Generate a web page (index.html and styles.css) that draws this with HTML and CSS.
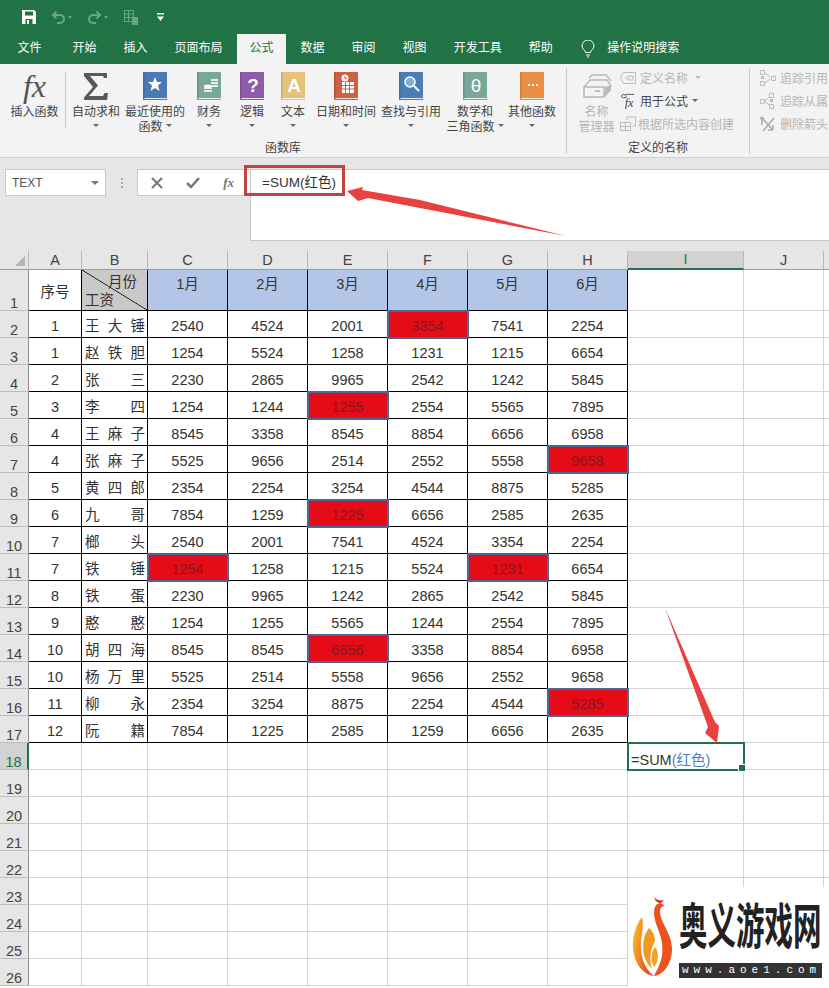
FILE: index.html
```html
<!DOCTYPE html>
<html lang="zh-CN">
<head>
<meta charset="utf-8">
<title>Excel</title>
<link rel="stylesheet" href="styles.css">
</head>
<body>
<div class="app">
  <header class="titlebar">
    <svg class="qat-save" width="16" height="16" viewBox="0 0 16 16"><path fill="#fff" d="M1 1h12l2 2v12H1z"/><path fill="#217346" d="M4 2.500h8v4H4zM4.500 10h7v5h-7z"/><path fill="#fff" d="M6 11h2v4H6z"/></svg>
    <svg class="qat-undo" width="15" height="14" viewBox="0 0 15 14"><path fill="none" stroke="#6ba487" stroke-width="2" d="M3 5h6a4 4 0 0 1 0 8H6M5.500 1.500 2 5l3.500 3.500"/></svg>
    <i class="qat-drop"></i>
    <svg class="qat-redo" width="15" height="14" viewBox="0 0 15 14"><path fill="none" stroke="#6ba487" stroke-width="2" d="M12 5H6a4 4 0 0 0 0 8h3M9.500 1.500 13 5 9.500 8.500"/></svg>
    <i class="qat-drop"></i>
    <svg class="qat-print" width="17" height="17" viewBox="0 0 17 17"><path fill="none" stroke="#6ba487" d="M1.500 1.500h9v11h-9zM1.500 5h9M1.500 8.500h9M5.500 1.500v11"/><path fill="#6ba487" d="M9 8h6v8H9z"/></svg>
    <svg class="qat-more" width="7" height="8" viewBox="0 0 7 8"><path fill="#fff" d="M0 0h7v1.500H0zM0 3.500h7L3.500 8z"/></svg>
  </header>

  <nav class="tabs">
    <span class="tab tab-file">文件</span>
    <span class="tab">开始</span>
    <span class="tab">插入</span>
    <span class="tab">页面布局</span>
    <span class="tab tab-active">公式</span>
    <span class="tab">数据</span>
    <span class="tab">审阅</span>
    <span class="tab">视图</span>
    <span class="tab">开发工具</span>
    <span class="tab">帮助</span>
    <svg class="bulb" width="14" height="18" viewBox="0 0 14 18"><path fill="none" stroke="#fff" d="M4.500 12.500C4 10 1 9 1 6a6 6 0 0 1 12 0c0 3-3 4-3.500 6.500zM5 15h4M6 17h2"/></svg>
    <span class="tab-search">操作说明搜索</span>
  </nav>

  <section class="ribbon">
    <div class="group group-lib">
      <div class="group-body">
        <div class="btn btn-insert">
          <div class="ico"><span class="fx-big">fx</span></div>
          <span class="line">插入函数</span>
        </div>
        <i class="vsep"></i>
        <div class="btn w60">
          <div class="ico"><svg width="24" height="27" viewBox="0 0 24 27"><path fill="#595959" d="M0 0h23v5h-3l-1-2H6l8 9.500L5 23h14l1.500-3H24l-1 7H0v-2.500L9 14 0 3z"/></svg></div>
          <span class="line">自动求和</span>
          <span class="line"><i class="caret"></i></span>
        </div>
        <div class="btn w58">
          <div class="ico"><svg class="book" viewBox="0 0 24 28"><use href="#bk" fill="#4a7ab5"/><path fill="#fff" d="m12 5 2 5h5l-4 3.500 1.500 5.500-4.500-3-4.500 3L9 13.500 5 10h5z"/></svg></div>
          <span class="line">最近使用的</span>
          <span class="line">函数 <i class="caret"></i></span>
        </div>
        <div class="btn w50">
          <div class="ico"><svg class="book" viewBox="0 0 24 28"><use href="#bk" fill="#7aa896"/><path fill="#e8f0ec" d="M7 15h8v2H7zM7 18h8v2H7zM14 7h7v2h-7zM14 10h7v2h-7zM15 13h6v2h-6z"/><ellipse cx="11" cy="14" rx="4" ry="1.500" fill="#fff"/></svg></div>
          <span class="line">财务</span>
          <span class="line"><i class="caret"></i></span>
        </div>
        <div class="btn w36">
          <div class="ico"><svg class="book" viewBox="0 0 24 28"><use href="#bk" fill="#8e5ba8"/><text x="13" y="20" class="ico-t">?</text></svg></div>
          <span class="line">逻辑</span>
          <span class="line"><i class="caret"></i></span>
        </div>
        <div class="btn w46">
          <div class="ico"><svg class="book" viewBox="0 0 24 28"><use href="#bk" fill="#e7c27a"/><text x="13" y="20" class="ico-t">A</text></svg></div>
          <span class="line">文本</span>
          <span class="line"><i class="caret"></i></span>
        </div>
        <div class="btn w60">
          <div class="ico"><svg class="book" viewBox="0 0 24 28"><use href="#bk" fill="#cf6043"/><circle cx="11" cy="6" r="3.500" fill="#fff"/><path stroke="#cf6043" fill="none" d="M11 4v2.500h2"/><path fill="#fff" d="M8 10h12v11H8z"/><path stroke="#cf6043" fill="none" d="M8 13.500h12M8 17h12M11.500 10v11M15.500 10v11"/></svg></div>
          <span class="line">日期和时间</span>
          <span class="line"><i class="caret"></i></span>
        </div>
        <div class="btn w70">
          <div class="ico"><svg class="book" viewBox="0 0 24 28"><use href="#bk" fill="#4a7fb5"/><circle cx="11" cy="10" r="5" fill="#7fb0dc" stroke="#fff" stroke-width="1.500"/><path stroke="#fff" stroke-width="2" d="m15 14 5 5"/></svg></div>
          <span class="line">查找与引用</span>
          <span class="line"><i class="caret"></i></span>
        </div>
        <div class="btn w58">
          <div class="ico"><svg class="book" viewBox="0 0 24 28"><use href="#bk" fill="#7aa898"/><text x="13" y="20" class="ico-t ico-thin">θ</text></svg></div>
          <span class="line">数学和</span>
          <span class="line">三角函数 <i class="caret"></i></span>
        </div>
        <div class="btn w56">
          <div class="ico"><svg class="book" viewBox="0 0 24 28"><use href="#bk" fill="#e98f43"/><path fill="#fff" d="M8 12h2v2H8zM12 12h2v2h-2zM16 12h2v2h-2z"/></svg></div>
          <span class="line">其他函数</span>
          <span class="line"><i class="caret"></i></span>
        </div>
      </div>
      <div class="group-label">函数库</div>
    </div>

    <div class="group group-names">
      <div class="group-body">
        <div class="btn btn-manager off">
          <div class="ico"><svg width="30" height="26" viewBox="0 0 30 26"><path fill="none" stroke="#b8b8b8" stroke-width="1.500" d="M2 14h20v10H2zM2 14l6-7h17l4 6-7 11M7 5l3-3h14l5 6"/><path fill="#bbb" d="M23 14l6-2v5l-6 7zM13 17h5v2h-5z"/></svg></div>
          <span class="line">名称</span>
          <span class="line">管理器</span>
        </div>
        <ul class="cmds cmds-names">
          <li class="cmd off"><svg class="cmd-ico" width="16" height="12" viewBox="0 0 16 12"><path fill="none" stroke="#bbb" d="M3.500.5h12v11h-12L.5 6zM5 6h2M8 4h5v4H8z"/></svg><span class="cmd-t">定义名称</span><i class="caret caret-far"></i></li>
          <li class="cmd"><svg class="cmd-ico" width="17" height="17" viewBox="0 0 17 17"><path fill="none" stroke="#555" d="M1.500 4.500a2.500 2.500 0 0 1 5 0v1h-3zM6 2h9"/><text x="5" y="15" class="ico-fx">fx</text></svg><span class="cmd-t">用于公式</span><i class="caret"></i></li>
          <li class="cmd off"><svg class="cmd-ico" width="16" height="15" viewBox="0 0 16 15"><path fill="none" stroke="#bbb" d="M.5 6.500h10v8H.5zM.5 10.500h10M5.500 6.500v8M7 4.500V1h8.500v9h-3"/></svg><span class="cmd-t cmd-near">根据所选内容创建</span></li>
        </ul>
      </div>
      <div class="group-label">定义的名称</div>
    </div>

    <div class="group group-audit">
      <ul class="cmds cmds-audit">
        <li class="cmd off"><svg class="cmd-ico" width="16" height="16" viewBox="0 0 16 16"><path fill="none" stroke="#bbb" d="M.5.500h4v4h-4zM.5 11.500h4v4h-4zM11.500 6.500h4v4h-4zM5 3l5 4M5 13l5-4"/><path fill="#bbb" d="M1 6h3v3H1z"/></svg><span class="cmd-t">追踪引用单元格</span></li>
        <li class="cmd off"><svg class="cmd-ico" width="16" height="16" viewBox="0 0 16 16"><path fill="none" stroke="#bbb" d="M.5 6.500h4v4h-4zM9.500.500h4v4h-4zM9.500 11.500h4v4h-4zM5 8l4-4M5 8l4 4"/><path fill="#bbb" d="M10 6h3v3h-3z"/></svg><span class="cmd-t">追踪从属单元格</span></li>
        <li class="cmd off"><svg class="cmd-ico" width="16" height="16" viewBox="0 0 16 16"><path fill="none" stroke="#aaa" stroke-width="1.500" d="M2 1v8M2 1 0 3M2 1l2 2M3 3l10 11M13 14V9M13 14H8M14 2 3 15"/></svg><span class="cmd-t">删除箭头</span></li>
      </ul>
    </div>
  </section>

  <section class="fbar">
    <div class="namebox"><span>TEXT</span><i class="caret caret-dark"></i></div>
    <div class="fdots"><i></i><i></i><i></i></div>
    <div class="fbtns">
      <svg width="12" height="12" viewBox="0 0 12 12"><path stroke="#777" stroke-width="2" d="m1 1 10 10M11 1 1 11"/></svg>
      <svg width="14" height="12" viewBox="0 0 14 12"><path fill="none" stroke="#777" stroke-width="2.500" d="m1 6 4 4 8-9"/></svg>
      <span class="f-fx">fx</span>
    </div>
    <div class="finput">=SUM(红色)</div>
  </section>

  <div class="sheet">
    <table class="grid">
      <colgroup><col class="c-rh"><col class="c-a"><col class="c-b"><col class="c-n"><col class="c-n"><col class="c-n"><col class="c-n"><col class="c-n"><col class="c-n"><col class="c-i"><col class="c-n"><col class="c-n"></colgroup>
      <tr class="r-head"><th class="corner"><i class="tri"></i></th><th>A</th><th>B</th><th>C</th><th>D</th><th>E</th><th>F</th><th>G</th><th>H</th><th class="h-sel">I</th><th>J</th><th></th></tr>
      <tr class="r-one"><th class="rh">1</th><td class="b mid">序号</td><td class="b diag"><span class="d-top">月份</span><span class="d-bot">工资</span></td><td class="b mon">1月</td><td class="b mon">2月</td><td class="b mon">3月</td><td class="b mon">4月</td><td class="b mon">5月</td><td class="b mon">6月</td><td></td><td></td><td></td></tr>
      <tr><th class="rh">2</th><td class="b">1</td><td class="b nm">王 大 锤</td><td class="b">2540</td><td class="b">4524</td><td class="b">2001</td><td class="b hot">3354</td><td class="b">7541</td><td class="b">2254</td><td></td><td></td><td></td></tr>
      <tr><th class="rh">3</th><td class="b">1</td><td class="b nm">赵 铁 胆</td><td class="b">1254</td><td class="b">5524</td><td class="b">1258</td><td class="b">1231</td><td class="b">1215</td><td class="b">6654</td><td></td><td></td><td></td></tr>
      <tr><th class="rh">4</th><td class="b">2</td><td class="b nm">张 三</td><td class="b">2230</td><td class="b">2865</td><td class="b">9965</td><td class="b">2542</td><td class="b">1242</td><td class="b">5845</td><td></td><td></td><td></td></tr>
      <tr><th class="rh">5</th><td class="b">3</td><td class="b nm">李 四</td><td class="b">1254</td><td class="b">1244</td><td class="b hot">1255</td><td class="b">2554</td><td class="b">5565</td><td class="b">7895</td><td></td><td></td><td></td></tr>
      <tr><th class="rh">6</th><td class="b">4</td><td class="b nm">王 麻 子</td><td class="b">8545</td><td class="b">3358</td><td class="b">8545</td><td class="b">8854</td><td class="b">6656</td><td class="b">6958</td><td></td><td></td><td></td></tr>
      <tr><th class="rh">7</th><td class="b">4</td><td class="b nm">张 麻 子</td><td class="b">5525</td><td class="b">9656</td><td class="b">2514</td><td class="b">2552</td><td class="b">5558</td><td class="b hot">9658</td><td></td><td></td><td></td></tr>
      <tr><th class="rh">8</th><td class="b">5</td><td class="b nm">黄 四 郎</td><td class="b">2354</td><td class="b">2254</td><td class="b">3254</td><td class="b">4544</td><td class="b">8875</td><td class="b">5285</td><td></td><td></td><td></td></tr>
      <tr><th class="rh">9</th><td class="b">6</td><td class="b nm">九 哥</td><td class="b">7854</td><td class="b">1259</td><td class="b hot">1225</td><td class="b">6656</td><td class="b">2585</td><td class="b">2635</td><td></td><td></td><td></td></tr>
      <tr><th class="rh">10</th><td class="b">7</td><td class="b nm">榔 头</td><td class="b">2540</td><td class="b">2001</td><td class="b">7541</td><td class="b">4524</td><td class="b">3354</td><td class="b">2254</td><td></td><td></td><td></td></tr>
      <tr><th class="rh">11</th><td class="b">7</td><td class="b nm">铁 锤</td><td class="b hot">1254</td><td class="b">1258</td><td class="b">1215</td><td class="b">5524</td><td class="b hot">1231</td><td class="b">6654</td><td></td><td></td><td></td></tr>
      <tr><th class="rh">12</th><td class="b">8</td><td class="b nm">铁 蛋</td><td class="b">2230</td><td class="b">9965</td><td class="b">1242</td><td class="b">2865</td><td class="b">2542</td><td class="b">5845</td><td></td><td></td><td></td></tr>
      <tr><th class="rh">13</th><td class="b">9</td><td class="b nm">憨 憨</td><td class="b">1254</td><td class="b">1255</td><td class="b">5565</td><td class="b">1244</td><td class="b">2554</td><td class="b">7895</td><td></td><td></td><td></td></tr>
      <tr><th class="rh">14</th><td class="b">10</td><td class="b nm">胡 四 海</td><td class="b">8545</td><td class="b">8545</td><td class="b hot">6656</td><td class="b">3358</td><td class="b">8854</td><td class="b">6958</td><td></td><td></td><td></td></tr>
      <tr><th class="rh">15</th><td class="b">10</td><td class="b nm">杨 万 里</td><td class="b">5525</td><td class="b">2514</td><td class="b">5558</td><td class="b">9656</td><td class="b">2552</td><td class="b">9658</td><td></td><td></td><td></td></tr>
      <tr><th class="rh">16</th><td class="b">11</td><td class="b nm">柳 永</td><td class="b">2354</td><td class="b">3254</td><td class="b">8875</td><td class="b">2254</td><td class="b">4544</td><td class="b hot">5285</td><td></td><td></td><td></td></tr>
      <tr><th class="rh">17</th><td class="b">12</td><td class="b nm">阮 籍</td><td class="b">7854</td><td class="b">1225</td><td class="b">2585</td><td class="b">1259</td><td class="b">6656</td><td class="b">2635</td><td></td><td></td><td></td></tr>
      <tr><th class="rh rh-sel">18</th><td></td><td></td><td></td><td></td><td></td><td></td><td></td><td></td><td class="sel">=SUM<span class="ref">(红色)</span></td><td></td><td></td></tr>
      <tr><th class="rh">19</th><td></td><td></td><td></td><td></td><td></td><td></td><td></td><td></td><td></td><td></td><td></td></tr>
      <tr><th class="rh">20</th><td></td><td></td><td></td><td></td><td></td><td></td><td></td><td></td><td></td><td></td><td></td></tr>
      <tr><th class="rh">21</th><td></td><td></td><td></td><td></td><td></td><td></td><td></td><td></td><td></td><td></td><td></td></tr>
      <tr><th class="rh">22</th><td></td><td></td><td></td><td></td><td></td><td></td><td></td><td></td><td></td><td></td><td></td></tr>
      <tr><th class="rh">23</th><td></td><td></td><td></td><td></td><td></td><td></td><td></td><td></td><td></td><td></td><td></td></tr>
      <tr><th class="rh">24</th><td></td><td></td><td></td><td></td><td></td><td></td><td></td><td></td><td></td><td></td><td></td></tr>
      <tr><th class="rh">25</th><td></td><td></td><td></td><td></td><td></td><td></td><td></td><td></td><td></td><td></td><td></td></tr>
      <tr><th class="rh">26</th><td></td><td></td><td></td><td></td><td></td><td></td><td></td><td></td><td></td><td></td><td></td></tr>
    </table>
  </div>

  <svg class="notes" width="829" height="988" viewBox="0 0 829 988">
    <rect x="245.500" y="166.500" width="98" height="28" fill="none" stroke="#c9413f" stroke-width="3"/>
    <path fill="#e8413f" d="M347 191 363 187 362 190 420 200 566 236 420 208 368 198 358 201z"/>
    <path fill="#e8413f" d="M665 608 715 722 719 726 717 743 705 733 708 727z"/>
  </svg>

  <aside class="logo">
    <svg class="logo-bird" width="46" height="84" viewBox="0 0 46 84">
      <defs><linearGradient id="fl" x1="0" y1="0" x2="1" y2="0.500"><stop offset="0" stop-color="#f6cb2a"/><stop offset="1" stop-color="#e8431c"/></linearGradient></defs>
      <path fill="#d8261c" d="M24 2c2 3 6 4 10 3l-3 3c-3 0-6-2-7-6z"/>
      <path fill="url(#fl)" d="M12 22C4 32 1 48 4 60c3 12 11 20 20 21-10-7-14-21-13-35 1-8 3-16 1-24z"/>
      <path fill="#f09a24" d="M19 33c-5 5-7 17-5 27 2 8 6 12 8 13-4-11 0-21 3-27 0-6-3-11-6-13z"/>
      <path fill="#f0a52a" d="M25 52c-4 4-5 14-1 20 4-4 6-14 1-20z"/>
      <path fill="#ea5320" d="M27 9c-5 5-3 15 1 25 5 12 6 24 2 34-2 6-5 10-6 13 10-1 18-13 18-27 0-16-12-26-12-38 0-3 2-5 5-5l-4-3z"/>
    </svg>
    <div class="logo-txt">
      <div class="logo-cn">奥义游戏网</div>
      <div class="logo-url">www.aoe1.com</div>
    </div>
  </aside>
</div>

<svg class="defs" width="0" height="0"><defs><g id="bk"><path d="M0 0h24v28H0z"/><path fill="#fff" opacity=".85" d="M1.500 26h22.500v1H1.500z"/><path fill="#000" opacity=".12" d="M0 0h1.500v26H0z"/></g></defs></svg>
</body>
</html>
```
FILE: styles.css
```css
* { box-sizing: border-box; }
html, body { margin: 0; padding: 0; }
body {
  width: 829px;
  height: 988px;
  overflow: hidden;
  background: #fff;
  font-family: "Liberation Sans", "Noto Sans CJK SC", sans-serif;
  color: #333;
}
i { display: block; font-style: normal; }
ul { margin: 0; padding: 0; list-style: none; }
.app { position: relative; width: 829px; height: 988px; overflow: hidden; }
.defs { position: absolute; }

/* title bar */
.titlebar {
  height: 34px;
  background: #217346;
  display: flex;
  align-items: center;
  padding-left: 21px;
}
.qat-undo { margin-left: 14px; }
.qat-redo { margin-left: 15px; }
.qat-drop { width: 0; height: 0; margin-left: 2px; border: 2.500px solid transparent; border-top: 3px solid #6ba487; border-bottom: 0; }
.qat-print { margin-left: 15px; }
.qat-more { margin-left: 17px; }

/* tabs */
.tabs {
  height: 30px;
  background: #217346;
  display: flex;
  align-items: flex-start;
  padding-left: 4px;
  color: #fff;
  font: 12px/26px "Noto Sans CJK SC", sans-serif;
}
.tab { padding: 0 13.500px; height: 30px; white-space: nowrap; }
.tab-file { margin-right: 4px; }
.tab-active { background: #f3f3f3; color: #217346; padding: 0 12.500px; margin: 0 1px; }
.bulb { margin: 6px 0 0 15px; }
.tab-search { margin-left: 12px; }

/* ribbon */
.ribbon {
  height: 94px;
  background: #f3f3f3;
  border-bottom: 1px solid #d2d2d2;
  display: flex;
  padding-top: 4px;
  font: 12px/15px "Noto Sans CJK SC", sans-serif;
  color: #444;
}
.group { height: 86px; display: flex; flex-direction: column; border-right: 1px solid #c8c8c8; flex: none; }
.group-lib { width: 567px; }
.group-names { width: 183px; }
.group-audit { flex: 1; border-right: 0; overflow: hidden; padding-left: 10px; min-width: 0; }
.group-body { height: 71px; display: flex; align-items: flex-start; }
.group-label { height: 15px; text-align: center; color: #444; }
.btn { flex: none; display: flex; flex-direction: column; align-items: center; padding-top: 4px; white-space: nowrap; }
.btn-insert { width: 61px; margin-left: 4px; }
.w36 { width: 36px; } .w46 { width: 46px; } .w50 { width: 50px; }
.w56 { width: 56px; } .w58 { width: 58px; } .w60 { width: 60px; } .w70 { width: 70px; }
.vsep { width: 1px; height: 56px; margin-top: 4px; background: #c8c8c8; flex: none; }
.ico { height: 28px; margin-bottom: 3px; display: flex; align-items: center; justify-content: center; }
.book { width: 24px; height: 28px; display: block; }
.line { display: flex; align-items: center; justify-content: center; gap: 3px; height: 15px; }
.fx-big { font: italic 32px/28px "Liberation Serif", serif; color: #555; }
.ico-t { font: bold 19px "Liberation Sans", sans-serif; fill: #fff; text-anchor: middle; }
.ico-thin { font-weight: normal; }
.ico-fx { font: italic 13px "Liberation Serif", serif; fill: #444; }
.caret { width: 0; height: 0; border-left: 3px solid transparent; border-right: 3px solid transparent; border-top: 3px solid #666; }
.caret-far { margin-left: 7px; border-top-color: #bbb; }
.caret-dark { border-left-width: 4px; border-right-width: 4px; border-top-width: 4px; border-top-color: #777; }
.off { color: #b5b5b5; }
.btn-manager { width: 53px; margin-left: 3px; }
.cmds { margin-top: -2px; width: 125px; flex: none; }
.cmds-names { margin-left: -3px; }
.cmd { height: 23px; display: flex; align-items: center; white-space: nowrap; }
.cmd-ico { width: 16px; flex: none; margin-right: 4px; }
.cmd-near { margin-left: -2px; }
.cmd .caret { margin-left: 4px; }
.cmd .caret-far { margin-left: 7px; }
.cmds-audit { width: auto; }

/* formula bar */
.fbar { height: 93px; background: #e6e6e6; display: flex; align-items: flex-start; padding: 11px 0 0 5px; }
.namebox {
  width: 101px; height: 27px; background: #fff; border: 1px solid #c8c8c8;
  display: flex; align-items: center; justify-content: space-between;
  padding: 0 6px 0 6px; font-size: 12px; color: #555;
}
.fdots { width: 31px; height: 27px; display: flex; flex-direction: column; align-items: center; justify-content: center; gap: 2px; }
.fdots i { width: 2px; height: 2px; background: #aaa; }
.fbtns {
  width: 113px; height: 27px; background: #fff; border: 1px solid #c8c8c8; border-right: 0;
  display: flex; align-items: center; justify-content: space-between; padding: 0 16px 0 13px;
}
.f-fx { font: italic bold 13px "Liberation Serif", serif; color: #777; }
.finput {
  flex: 1; height: 72px; background: #fff; border: 1px solid #c8c8c8; border-right: 0;
  padding: 4px 0 0 11px; font-size: 13.500px; line-height: 18px; color: #333;
}

/* sheet */
.grid { width: 904px; table-layout: fixed; border-collapse: separate; border-spacing: 0; font-size: 14.500px; }
.c-rh { width: 29px; } .c-a { width: 53px; } .c-b { width: 66px; } .c-n { width: 80px; } .c-i { width: 116px; }
.grid tr { height: 27px; }
.grid .r-head { height: 19px; }
.grid .r-one { height: 41px; }
.grid td, .grid th { padding: 0; font-weight: normal; overflow: visible; white-space: nowrap; }
.grid td {
  border-right: 1px solid #d4d4d4;
  border-bottom: 1px solid #d4d4d4;
  text-align: center;
  vertical-align: bottom;
  line-height: 22px;
}
.r-head th {
  background: #e6e6e6; color: #444; line-height: 17px; vertical-align: bottom;
  border-right: 1px solid #b9b9b9; border-bottom: 1px solid #9b9b9b;
}
.corner { position: relative; }
.tri { position: absolute; right: 3px; bottom: 3px; width: 0; height: 0; border-left: 10px solid transparent; border-bottom: 10px solid #b5b5b5; }
.rh {
  background: #e6e6e6; color: #444; text-align: center; vertical-align: bottom; line-height: 14px;
  border-right: 1px solid #8f8f8f; border-bottom: 1px solid #bdbdbd;
}
.r-head .h-sel { background: #d2d2d2; color: #217346; border-bottom: 2px solid #217346; }
.grid .rh-sel { background: #d2d2d2; color: #217346; border-right: 2px solid #217346; }
.grid td.b { border-right-color: #000; border-bottom-color: #000; }
.grid td.mid { vertical-align: middle; line-height: 20px; padding-top: 3px; }
.grid td.mon { background: #b4c6e7; vertical-align: top; line-height: 28px; }
.grid td.nm { text-align: justify; text-align-last: justify; padding: 0 2px 0 3px; white-space: normal; }
.grid td.hot { background: #e60c17; color: #7d1a20; outline: 2px solid #4c6797; outline-offset: -1px; position: relative; }
.grid td.diag {
  background: linear-gradient(to top right, transparent calc(50% - .7px), #000 50%, transparent calc(50% + .7px)), #c9c9c9;
  vertical-align: top;
  line-height: 18px;
  text-align: left;
}
.d-top, .d-bot { display: block; }
.d-top { text-align: right; padding: 3px 10px 0 0; }
.d-bot { padding-left: 3px; }
.grid td.sel {
  position: relative;
  outline: 2px solid #217346;
  outline-offset: -1px;
  text-align: left;
  padding-left: 3px;
  line-height: 17px;
}
.sel::after {
  content: "";
  position: absolute;
  right: -3px;
  bottom: -3px;
  width: 6px;
  height: 6px;
  background: #217346;
  border: 1px solid #fff;
}
.ref { color: #4f81bd; }

/* annotations */
.notes { position: absolute; left: 0; top: 0; pointer-events: none; }

/* watermark */
.logo {
  position: absolute;
  right: 0;
  bottom: 0;
  width: 201px;
  height: 101px;
  background: #fff;
  display: flex;
  align-items: flex-start;
  padding: 8px 0 0 2px;
}
.logo-bird { flex: none; }
.logo-txt { margin: 3px 0 0 3px; width: 143px; }
.logo-cn {
  font: bold 28.500px/30px "Noto Sans CJK SC", sans-serif;
  color: #222;
  white-space: nowrap;
  transform: scaleY(1.700);
  transform-origin: top left;
  height: 65px;
}
.logo-url {
  height: 15px;
  background: #333;
  color: #fff;
  font: 11px/15px "Liberation Mono", monospace;
  letter-spacing: 5px;
  padding-left: 3px;
  white-space: nowrap;
  overflow: hidden;
}
```
